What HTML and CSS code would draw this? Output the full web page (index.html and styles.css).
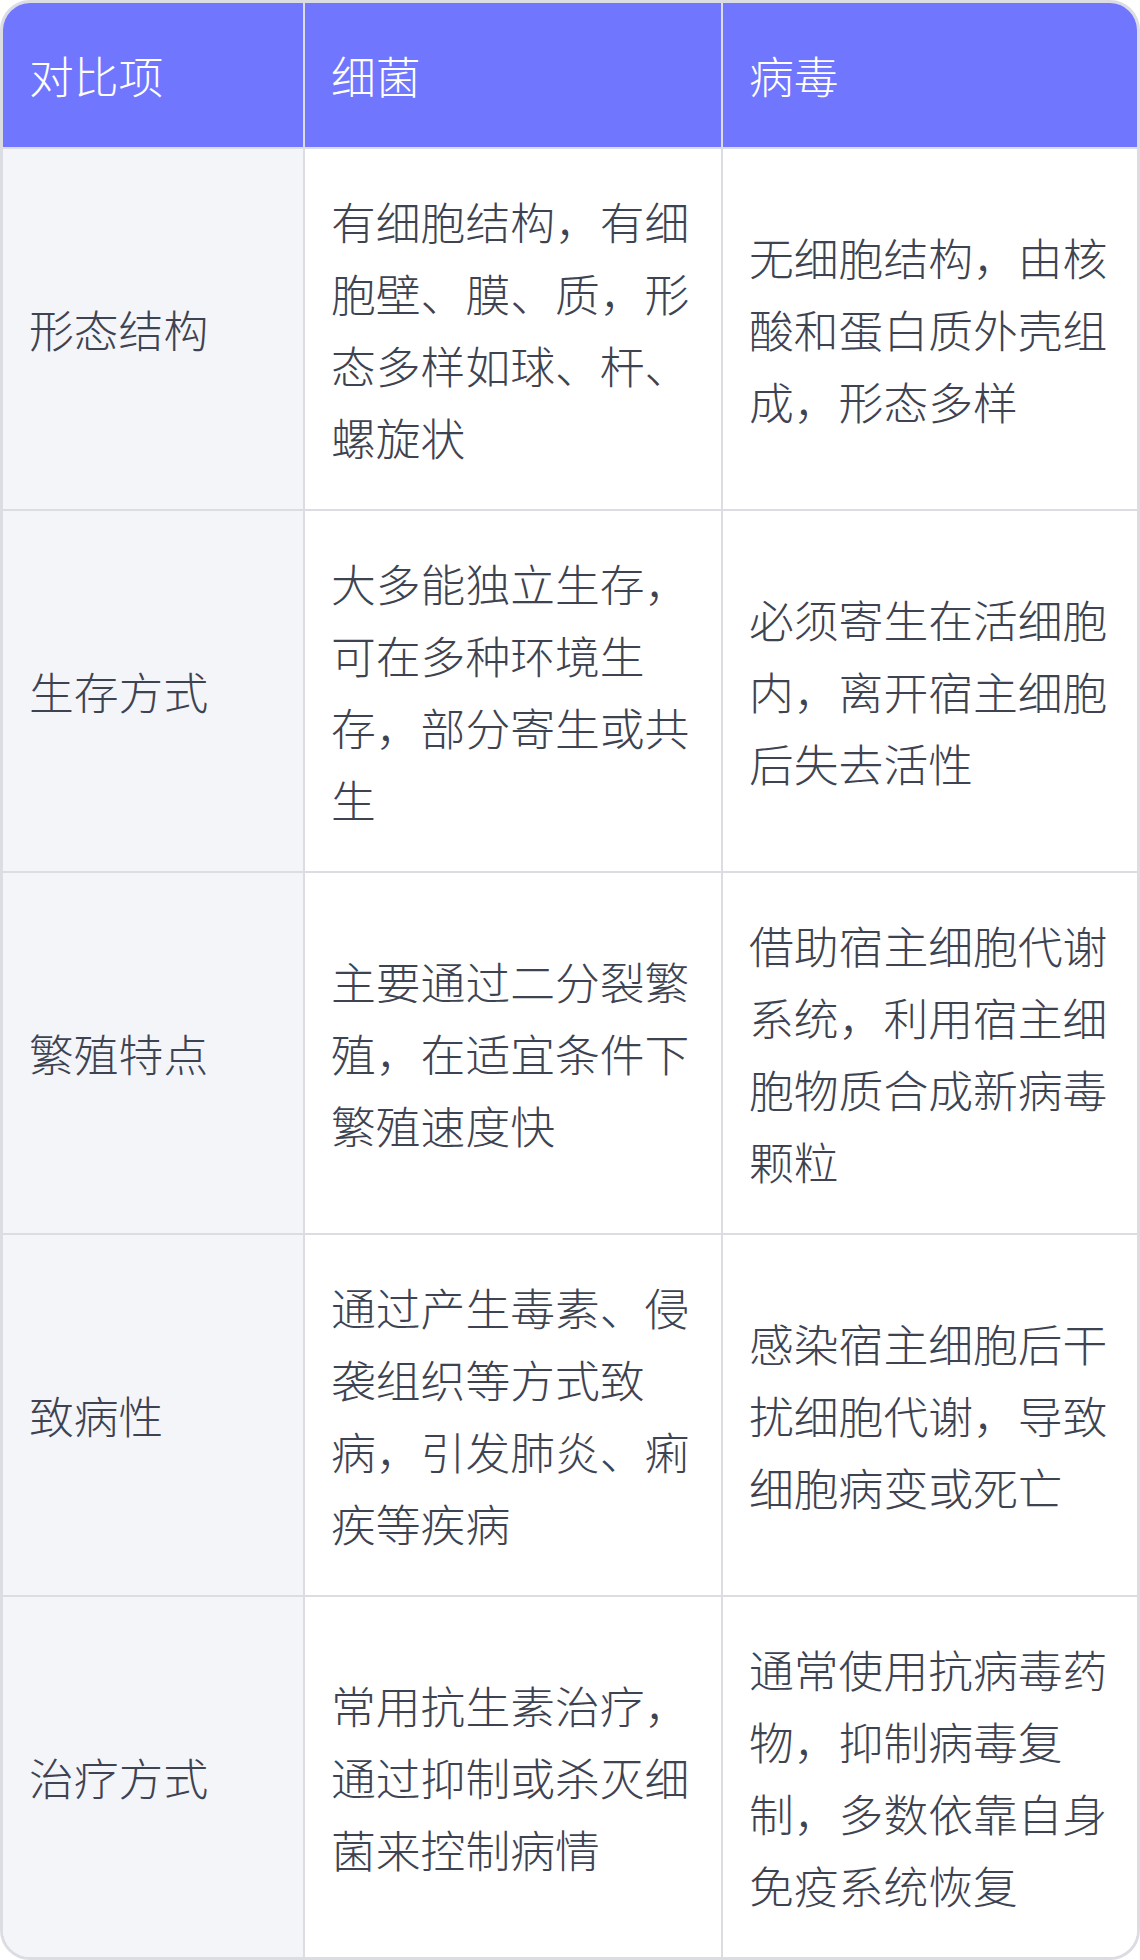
FILE: index.html
```html
<!DOCTYPE html>
<html lang="zh-CN">
<head>
    <meta charset="UTF-8">
    <meta name="viewport" content="width=device-width, initial-scale=1.0">
    <title>细菌与病毒对比</title>
    <link rel="stylesheet" href="styles.css">
</head>
<body>
    <div class="table-wrap">
        <table class="compare-table">
            <thead>
                <tr>
                    <th class="col-item">对比项</th>
                    <th class="col-a">细菌</th>
                    <th class="col-b">病毒</th>
                </tr>
            </thead>
            <tbody>
                <tr>
                    <td class="item">形态结构</td>
                    <td>有细胞结构，有细胞壁、膜、质，形态多样如球、杆、螺旋状</td>
                    <td>无细胞结构，由核酸和蛋白质外壳组成，形态多样</td>
                </tr>
                <tr>
                    <td class="item">生存方式</td>
                    <td>大多能独立生存，可在多种环境生存，部分寄生或共生</td>
                    <td>必须寄生在活细胞内，离开宿主细胞后失去活性</td>
                </tr>
                <tr>
                    <td class="item">繁殖特点</td>
                    <td>主要通过二分裂繁殖，在适宜条件下繁殖速度快</td>
                    <td>借助宿主细胞代谢系统，利用宿主细胞物质合成新病毒颗粒</td>
                </tr>
                <tr>
                    <td class="item">致病性</td>
                    <td>通过产生毒素、侵袭组织等方式致病，引发肺炎、痢疾等疾病</td>
                    <td>感染宿主细胞后干扰细胞代谢，导致细胞病变或死亡</td>
                </tr>
                <tr>
                    <td class="item">治疗方式</td>
                    <td>常用抗生素治疗，通过抑制或杀灭细菌来控制病情</td>
                    <td>通常使用抗病毒药物，抑制病毒复制，多数依靠自身免疫系统恢复</td>
                </tr>
            </tbody>
        </table>
    </div>
</body>
</html>
```

FILE: styles.css
```css
* {
    box-sizing: border-box;
    margin: 0;
    padding: 0;
}
body {
    font-family: "Noto Sans CJK SC", "Noto Sans", sans-serif;
    background-color: #ffffff;
    color: #3e4351;
    width: 1140px;
    height: 1960px;
}
.table-wrap {
    width: 1140px;
    height: 1960px;
    border: 3px solid #dcdde3;
    border-radius: 30px;
    overflow: hidden;
}
.compare-table {
    width: 100%;
    border-collapse: separate;
    border-spacing: 0;
    table-layout: fixed;
    font-size: 44.8px;
    font-weight: 300;
    line-height: 72px;
}
.compare-table th,
.compare-table td {
    padding: 36px 29px 36px 26px;
    text-align: left;
    vertical-align: middle;
    font-weight: 300;
    border-left: 2px solid #dcdde3;
}
.compare-table th:first-child,
.compare-table td:first-child {
    border-left: none;
}
.compare-table th {
    background-color: #7176ff;
    color: #ffffff;
    height: 144px;
}
.compare-table td {
    border-top: 2px solid #dcdde3;
    height: 362px;
    background-color: #ffffff;
}
.compare-table td.item {
    background-color: #f4f5f9;
}
.col-item {
    width: 300px;
}
.col-a {
    width: 418px;
}
```
